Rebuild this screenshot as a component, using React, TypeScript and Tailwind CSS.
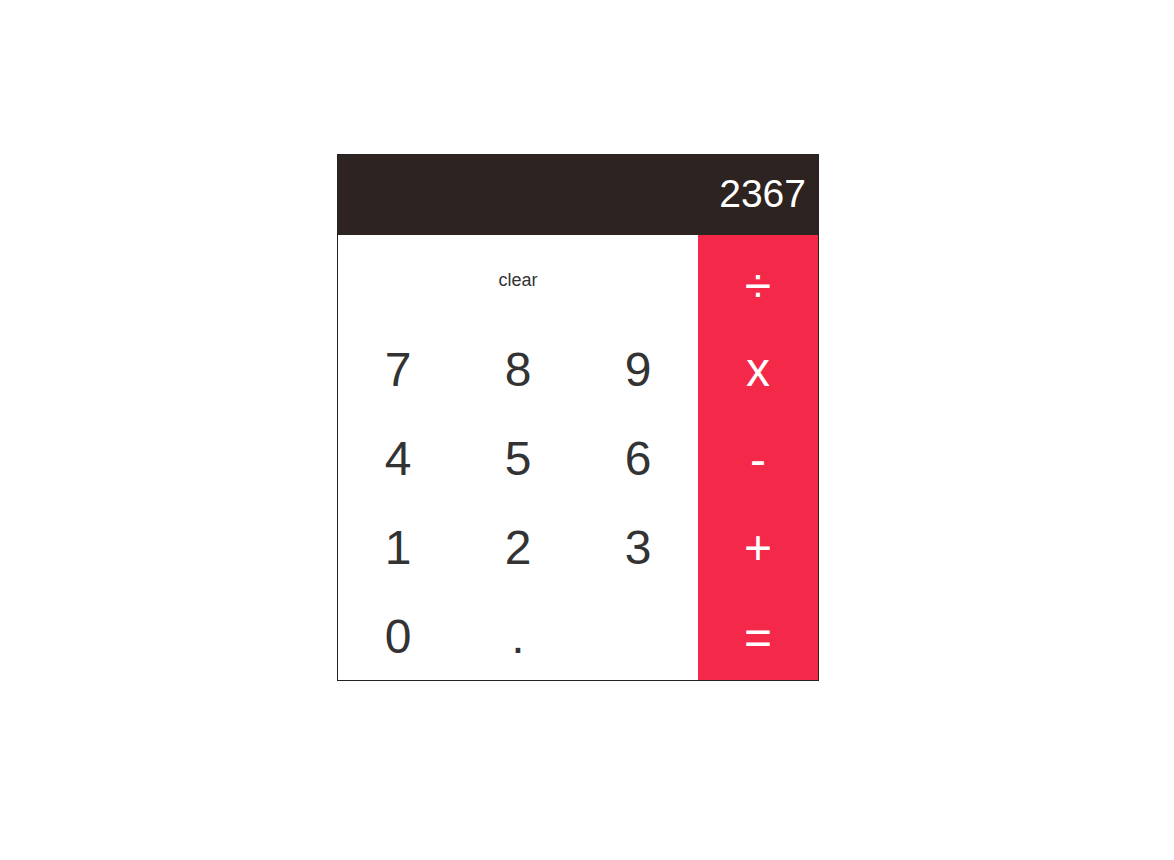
import React from "react";

const digitCls =
  "flex items-center justify-center h-[89px] pt-[2px] text-[48px] leading-none text-[#333333]";
const opCls =
  "flex items-center justify-center h-[89px] text-[48px] leading-none text-white bg-[#f42848]";

export default function App() {
  const rows = [
    ["7", "8", "9", "x"],
    ["4", "5", "6", "-"],
    ["1", "2", "3", "+"],
    ["0", ".", "", "="],
  ];
  const opPad: Record<string, string> = {
    x: "pt-[2px]",
    "-": "pt-[5px]",
    "+": "pt-[3px]",
    "=": "pt-[4px]",
  };
  return (
    <div
      className="min-h-[860px] bg-white pt-[154px] pl-[337px]"
      style={{ fontFamily: '"Liberation Sans", Arial, sans-serif' }}
    >
      <div className="w-[482px] border border-[#222222]">
        <div className="h-[80px] bg-[#2d2321] flex items-center justify-end pr-[12px] pb-[4px] text-[39px] leading-none text-white">
          2367
        </div>
        <div className="grid grid-cols-[120px_120px_120px_120px]">
          <div className="col-span-3 flex items-center justify-center h-[89px] pt-[2px] text-[18px] text-[#333333]">
            clear
          </div>
          <div className={`${opCls} pt-[13px]`}>÷</div>
          {rows.map((r, i) =>
            r.map((c, j) =>
              j === 3 ? (
                <div key={`${i}-${j}`} className={`${opCls} ${opPad[c]}`}>
                  {c}
                </div>
              ) : (
                <div key={`${i}-${j}`} className={digitCls}>
                  {c}
                </div>
              )
            )
          )}
        </div>
      </div>
    </div>
  );
}
